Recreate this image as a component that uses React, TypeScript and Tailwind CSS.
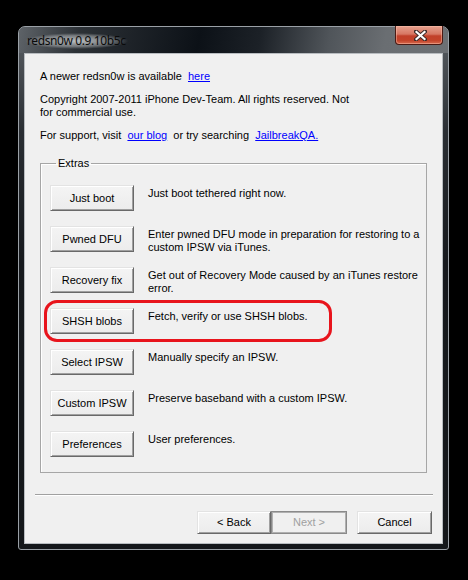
import React from "react";

type Row = { label: string; desc: string[]; highlight?: boolean };

const rows: Row[] = [
  { label: "Just boot", desc: ["Just boot tethered right now."] },
  {
    label: "Pwned DFU",
    desc: ["Enter pwned DFU mode in preparation for restoring to a", "custom IPSW via iTunes."],
  },
  {
    label: "Recovery fix",
    desc: ["Get out of Recovery Mode caused by an iTunes restore", "error."],
  },
  { label: "SHSH blobs", desc: ["Fetch, verify or use SHSH blobs."], highlight: true },
  { label: "Select IPSW", desc: ["Manually specify an IPSW."] },
  { label: "Custom IPSW", desc: ["Preserve baseband with a custom IPSW."] },
  { label: "Preferences", desc: ["User preferences."] },
];

function WinButton({
  children,
  className = "",
  disabled = false,
}: {
  children: React.ReactNode;
  className?: string;
  disabled?: boolean;
}) {
  if (disabled) {
    return (
      <div
        className={`flex items-center justify-center border border-[#8a8a8a] bg-[#f0f0f0] text-[#a0a0a0] shadow-[inset_1px_1px_0_#b0b0b0,inset_-1px_-1px_0_#b0b0b0] ${className}`}
      >
        {children}
      </div>
    );
  }
  return (
    <div
      className={`flex items-center justify-center border border-t-[#e3e3e3] border-l-[#e3e3e3] border-r-[#696969] border-b-[#696969] bg-[linear-gradient(#f4f4f4,#ececec)] text-black shadow-[inset_1px_1px_0_#ffffff,inset_-1px_-1px_0_#a0a0a0] ${className}`}
    >
      {children}
    </div>
  );
}

export default function App() {
  return (
    <div className="w-[468px] h-[580px] bg-black pt-[26px] pl-[18px] font-['Liberation_Sans',Arial,sans-serif] text-[11px] leading-[13px] text-black">
      <div className="relative flex h-[524px] w-[431px] flex-col rounded-t-[7px] rounded-b-[3px] border border-[#9aa0a6] bg-[linear-gradient(#5c6166_0%,#2a2e33_20%,#16191d_45%,#14171a_100%)]">
        {/* Title bar */}
        <div className="flex h-[26px] items-center rounded-t-[6px] bg-[linear-gradient(100deg,#5e6368_0%,#2c3136_14%,#0c1117_42%,#1c2127_56%,#50555a_72%,#6a6e72_85%,#6c7074_100%)] pl-[6px] pt-[2px]">
          <span className="rounded-[10px] bg-[radial-gradient(closest-side,rgba(235,238,240,0.75),rgba(235,238,240,0.35)_70%,rgba(235,238,240,0))] px-[2px] font-['Noto_Sans',sans-serif] text-[12px] leading-[16px] tracking-[-0.4px] text-[#0a0a0a]">
            redsn0w 0.9.10b5c
          </span>
        </div>

        {/* Close button */}
        <div className="absolute top-[-1px] right-[5px] flex h-[19px] w-[48px] items-center justify-center rounded-b-[4px] border border-[#4a1a14] border-t-0 bg-[linear-gradient(#e6a08e_0%,#d77763_45%,#c1402a_55%,#c3432a_80%,#d66a4e_100%)] shadow-[inset_0_0_0_1px_rgba(255,200,180,0.45)]">
          <svg width="13" height="11" viewBox="0 0 13 11" className="ml-[3px]">
            <path d="M2 1.5 L11 9.5 M11 1.5 L2 9.5" stroke="#3a2a28" strokeWidth="4" strokeLinecap="square" />
            <path d="M2.5 2 L10.5 9 M10.5 2 L2.5 9" stroke="#ffffff" strokeWidth="2.2" strokeLinecap="square" />
          </svg>
        </div>

        {/* Client area */}
        <div className="mx-[5px] mb-[5px] flex flex-1 flex-col border border-[#b8bcc0] bg-[#f0f0f0]">
          <div className="pl-[15px] pt-[16px]">
            <p className="mb-[10px]">
              A newer redsn0w is available&nbsp;{" "}
              <span className="text-[#0000ff] underline">here</span>
            </p>
            <p className="mb-[10px]">
              Copyright 2007-2011 iPhone Dev-Team. All rights reserved. Not
              <br />
              for commercial use.
            </p>
            <p>
              For support, visit&nbsp;{" "}
              <span className="text-[#0000ff] underline">our blog</span>&nbsp; or try searching&nbsp;{" "}
              <span className="text-[#0000ff] underline">JailbreakQA.</span>
            </p>
          </div>

          <fieldset className="ml-[15px] mt-[15px] w-[387px] border border-[#a6a6a6] shadow-[inset_1px_1px_0_#ffffff] pl-[9px] pr-[4px] pt-[15px] pb-[15px]">
            <legend className="ml-[6px] px-[2px]">Extras</legend>
            <div className="flex flex-col gap-[15px]">
              {rows.map((r) => (
                <div key={r.label} className="relative flex h-[26px] items-start">
                  <WinButton className="h-[26px] w-[84px] shrink-0">{r.label}</WinButton>
                  <div className="ml-[14px] pt-[2px] whitespace-nowrap">
                    {r.desc.map((d, i) => (
                      <div key={i}>{d}</div>
                    ))}
                  </div>
                  {r.highlight && (
                    <div className="pointer-events-none absolute left-[-6px] top-[-8px] h-[42px] w-[288px] rounded-[13px] border-[3px] border-[#e8141c]" />
                  )}
                </div>
              ))}
            </div>
          </fieldset>

          <div className="ml-[10px] mt-[21px] w-[398px] border-t border-b border-t-[#a0a0a0] border-b-white" />

          <div className="mt-[15px] flex justify-end pr-[10px]">
            <WinButton className="h-[23px] w-[74px]">&lt; Back</WinButton>
            <WinButton className="h-[23px] w-[76px]" disabled>
              Next &gt;
            </WinButton>
            <WinButton className="ml-[10px] h-[23px] w-[75px]">Cancel</WinButton>
          </div>
        </div>
      </div>
    </div>
  );
}
